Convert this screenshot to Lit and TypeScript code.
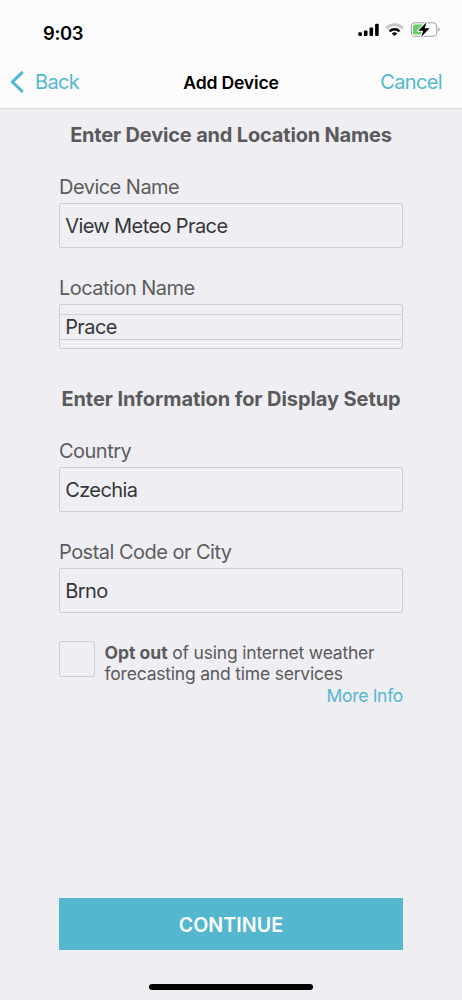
import { LitElement, html, css, svg } from "lit";
import { customElement, property } from "lit/decorators.js";

@customElement("status-bar")
class StatusBar extends LitElement {
  static styles = css`
    :host { display: flex; justify-content: space-between; height: 57px; padding: 0 21px 0 43px; box-sizing: border-box; }
    .time { font-size: 18.4px; font-weight: 600; line-height: 24px; padding-top: 21px; letter-spacing: -0.35px; color: #000; }
    .icons { display: block; margin-top: 18px; }
  `;
  render() {
    const bars = [
      [0, 14.1, 3.7],
      [5.6, 12.3, 5.5],
      [11.2, 9.3, 8.5],
      [16.8, 5.6, 12.2],
    ];
    return html`
      <div class="time">9:03</div>
      <svg class="icons" width="83" height="24" viewBox="0 0 83 24">
        ${bars.map(([x, y, h]) => svg`<rect x=${x + 0.3} y=${y + 0.2} width="3.6" height=${h} rx="1" fill="#000"/>`)}
        <g transform="translate(36.5 18)" fill="none">
          <path d="M-8.2 -7.9A11.6 11.6 0 0 1 8.2 -7.9" stroke="#c4c4c6" stroke-width="2.7"/>
          <path d="M-5 -4.7A7.1 7.1 0 0 1 5 -4.7" stroke="#000" stroke-width="2.6"/>
          <path d="M0 .1L-2.7 -2.5A3.8 3.8 0 0 1 2.7 -2.5Z" fill="#000"/>
        </g>
        <rect x="53.3" y="4.8" width="25.4" height="13.4" rx="3.8" fill="#fcfcfd" stroke="#a3a3a5" stroke-width="1.1"/>
        <path d="M57.2 6.5H65V16.5H57.2A2.2 2.2 0 0 1 55 14.3V8.7A2.2 2.2 0 0 1 57.2 6.5Z" fill="#65ce6c"/>
        <path d="M80.3 9.2A2.5 2.5 0 0 1 80.3 13.7Z" fill="#a3a3a5"/>
        <path d="M68.6 4.2L60.2 12.8H65.3L63.2 19L71.6 10.3H66.6Z" fill="#000" stroke="#fcfcfd" stroke-width="2.2" paint-order="stroke" stroke-linejoin="round"/>
      </svg>
    `;
  }
}

@customElement("nav-bar")
class NavBar extends LitElement {
  static styles = css`
    :host { display: grid; grid-template-columns: 1fr auto 1fr; align-items: center; height: 50px; padding: 0 20px 0 9px; box-sizing: border-box; }
    .back { display: flex; align-items: center; gap: 10px; }
    .link { color: #53b7d0; font-size: 20px; line-height: 24px; letter-spacing: -0.65px; }
    .title { font-size: 17.6px; font-weight: 600; line-height: 24px; letter-spacing: -0.2px; color: #000; padding: 1px 0 0 11px; }
    .cancel { text-align: right; }
    .chevron { display: block; }
  `;
  render() {
    return html`
      <div class="back link">
        <svg class="chevron" width="16" height="24" viewBox="0 0 16 24">
          <path d="M13.8 1.8L3.3 11.9L13.8 22" fill="none" stroke="#53b7d0" stroke-width="3" stroke-linejoin="round"/>
        </svg>
        <span>Back</span>
      </div>
      <div class="title">Add Device</div>
      <div class="cancel link">Cancel</div>
    `;
  }
}

@customElement("form-field")
class FormField extends LitElement {
  @property() label = "";
  @property() value = "";
  @property({ type: Boolean }) nested = false;
  static styles = css`
    :host { display: block; }
    .label { height: 24px; line-height: 24px; margin-bottom: 4px; font-size: 20px; letter-spacing: -0.52px; color: #5c5c5e; }
    .box { display: flex; flex-direction: column; justify-content: center; height: 45px; box-sizing: border-box; border: 1px solid #ccced9; border-radius: 2px; color: #363638; font-size: 20px; letter-spacing: -0.6px; }
    .value { line-height: 24px; padding: 1px 0 0 5.2px; }
    .inner { height: 24px; margin-top: 1px; padding-top: 0; border-top: 1px solid #d0d1da; border-bottom: 1px solid #ccced9; border-radius: 2px; }
  `;
  render() {
    return html`
      <div class="label">${this.label}</div>
      <div class="box"><div class="value ${this.nested ? "inner" : ""}">${this.value}</div></div>
    `;
  }
}

@customElement("app-root")
class AppRoot extends LitElement {
  static styles = css`
    :host { display: flex; flex-direction: column; width: 462px; height: 1000px; background: #efeef3; font-family: Inter, "Liberation Sans", sans-serif; color: #5a5a5c; overflow: hidden; }
    .top { background: #fcfcfd; border-bottom: 1px solid #dcdce0; padding-bottom: 0.6px; }
    .form { display: flex; flex-direction: column; padding: 13.4px 59px 0; flex: 1; }
    .heading { margin: 0; text-align: center; font-size: 20px; line-height: 24px; padding-top: 1px; font-weight: 700; letter-spacing: -0.18px; white-space: nowrap; }
    .first { margin-top: 28px; }
    .next { margin-top: 28px; }
    .second { margin-top: 37px; letter-spacing: -0.08px; }
    .opt { display: flex; gap: 9.5px; margin-top: 28px; }
    .check { width: 36px; height: 36px; box-sizing: border-box; border: 1px solid #ccced9; border-radius: 2px; flex: none; }
    .copy { font-size: 17.5px; line-height: 21px; padding-top: 1px; white-space: nowrap; letter-spacing: -0.2px; }
    .copy b { letter-spacing: 0; }
    .more { text-align: right; color: #53b7d0; font-size: 17.5px; line-height: 22px; margin-top: 1px; letter-spacing: -0.3px; }
    .continue { display: flex; align-items: center; justify-content: center; height: 52px; box-sizing: border-box; padding-top: 2px; margin: auto 0 34px; background: #54b6cf; color: #fff; font-size: 19.6px; font-weight: 600; letter-spacing: 0.1px; }
    .home { width: 164px; height: 6.4px; margin: 0 auto 9.6px; border-radius: 3.2px; background: #000; }
  `;
  render() {
    return html`
      <div class="top"><status-bar></status-bar><nav-bar></nav-bar></div>
      <div class="form">
        <h2 class="heading">Enter Device and Location Names</h2>
        <form-field class="first" label="Device Name" value="View Meteo Prace"></form-field>
        <form-field class="next" label="Location Name" value="Prace" nested></form-field>
        <h2 class="heading second">Enter Information for Display Setup</h2>
        <form-field class="first" label="Country" value="Czechia"></form-field>
        <form-field class="next" label="Postal Code or City" value="Brno"></form-field>
        <div class="opt">
          <div class="check"></div>
          <div class="copy"><b>Opt out</b> of using internet weather<br />forecasting and time services</div>
        </div>
        <div class="more">More Info</div>
        <div class="continue">CONTINUE</div>
      </div>
      <div class="home"></div>
    `;
  }
}
